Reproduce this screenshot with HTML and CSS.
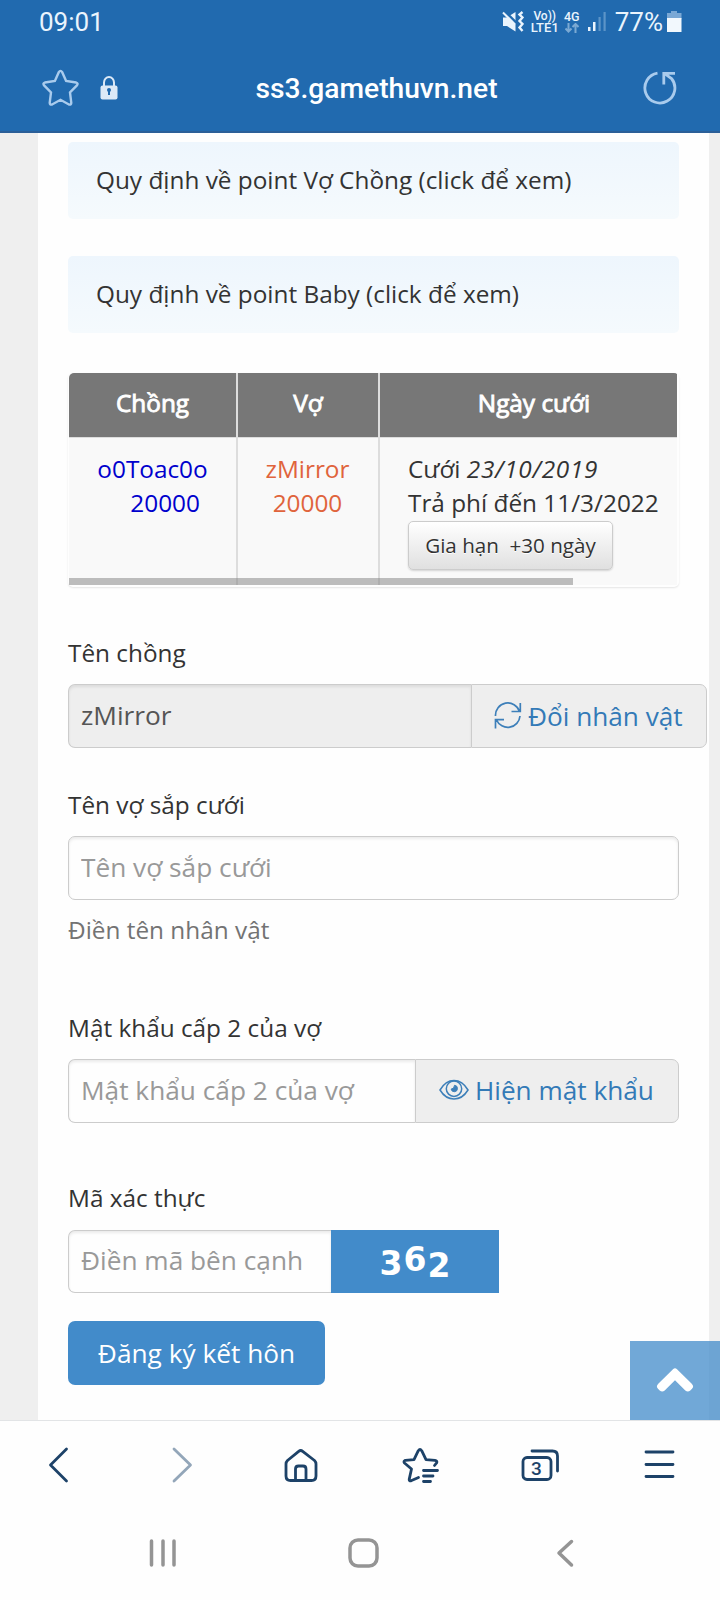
FILE: index.html
```
<!DOCTYPE html>
<html lang="vi">
<head>
  <meta charset="utf-8">
  <title>ss3.gamethuvn.net</title>
  <link rel="stylesheet" href="styles.css">
</head>
<body>
  <div class="topbar">
    <div class="status">
      <span class="clock">09:01</span>
      <svg class="mute" width="22" height="22" viewBox="0 0 22 22">
        <path d="M1 6.500h4L13.500 1v19.500L5 15H1z" fill="#eaf4fd"/>
        <path d="M2.500 0l12 12" stroke="#216aaf" stroke-width="2.500"/>
        <path d="M1 1.500l12 12" stroke="#eaf4fd" stroke-width="2"/>
        <path d="M20.500 1L17.500 3.500l3 3-3 3.500 3 3-3 3.500 3 3.500" fill="none" stroke="#eaf4fd" stroke-width="2.400"/>
      </svg>
      <div class="volte"><span>Vo))</span><span class="lte">LTE1</span></div>
      <div class="data">
        <span>4G</span>
        <svg width="14" height="10" viewBox="0 0 14 10">
          <path d="M3.500 0v8.500M.5 5.500l3 3 3-3M10.500 10V1M7.500 4l3-3 3 3" fill="none" stroke="#7ba9d3" stroke-width="2"/>
        </svg>
      </div>
      <svg class="signal" width="19" height="20" viewBox="0 0 19 20">
        <path d="M0 15h2.500v4H0zM5 10h2.500v9H5z" fill="#eaf4fd"/>
        <path d="M10.500 5h2.200v14h-2.200zM15.500 0h2.200v19h-2.200z" fill="#5c94c8"/>
      </svg>
      <span class="percent">77%</span>
      <svg class="battery" width="15" height="22" viewBox="0 0 15 22">
        <path d="M4 0h6v2h4.500v6H0V2h4z" fill="#7aa8d5"/>
        <path d="M0 7h14.500v14H0z" fill="#f2f8fd"/>
      </svg>
    </div>
    <div class="address">
      <svg class="fav" width="38" height="38" viewBox="0 0 38 38">
        <path d="M16.800 3.200q1.700-2.600 3.400 0L24.100 12l10 1.500q2.400.9.800 2.900L28 23.500l1.300 10.400q-.2 2.300-2.400 1.600L18.500 30.800l-8.400 4.700q-2.200.7-2.400-1.600L9 23.500 2.100 16.400q-1.600-2 .8-2.900l10-1.500z" fill="none" stroke="#a9cbed" stroke-width="2.400"/>
      </svg>
      <svg class="lock" width="18" height="24" viewBox="0 0 18 24">
        <path d="M4 11V6.500a5 5.500 0 0 1 10 0V11" fill="none" stroke="#dce9f7" stroke-width="2"/>
        <rect x=".5" y="9.500" width="17" height="14" rx="2" fill="#dce9f7"/>
        <path d="M9 14v5" stroke="#216aaf" stroke-width="2"/>
        <circle cx="9" cy="14" r="2" fill="#216aaf"/>
      </svg>
      <div class="url">ss3.gamethuvn.net</div>
      <svg class="reload" width="36" height="36" viewBox="0 0 36 36">
        <path d="M15.500 3.200A15 15 0 1 0 29.500 8.500L23 3.800M21.800 14.500V3.300H33" fill="none" stroke="#a9cbed" stroke-width="2.800"/>
      </svg>
    </div>
  </div>

  <div class="viewport">
    <div class="page">
      <div class="notice">Quy định về point Vợ Chồng (click để xem)</div>
      <div class="notice">Quy định về point Baby (click để xem)</div>

      <div class="table-box">
        <table>
          <tr>
            <th class="col-husband">Chồng</th>
            <th class="col-wife">Vợ</th>
            <th class="col-date">Ngày cưới</th>
          </tr>
          <tr>
            <td class="husband">o0Toac0o<br>&nbsp;&nbsp;&nbsp; 20000</td>
            <td class="wife">zMirror<br>20000</td>
            <td class="wedding">Cưới <em>23/10/2019</em><br>Trả phí đến 11/3/2022<br><button class="btn-renew">Gia hạn &nbsp;+30 ngày</button></td>
          </tr>
        </table>
        <div class="scroll-thumb"></div>
      </div>

      <label>Tên chồng</label>
      <div class="input-group group-husband">
        <input type="text" value="zMirror" readonly>
        <a class="addon">
          <svg width="28" height="28" viewBox="0 0 28 28">
            <path d="M1.500 14A12.300 12.300 0 0 1 25.500 9.500M17.500 9.500h8.800V1M26 14A12.300 12.300 0 0 1 2.500 18M10 17.700H1.500V26.500" fill="none" stroke="#3d7fb9" stroke-width="1.700"/>
          </svg>
          Đổi nhân vật
        </a>
      </div>

      <label>Tên vợ sắp cưới</label>
      <div class="input-group">
        <input type="text" placeholder="Tên vợ sắp cưới">
      </div>
      <p class="help">Điền tên nhân vật</p>

      <label>Mật khẩu cấp 2 của vợ</label>
      <div class="input-group group-password">
        <input type="text" placeholder="Mật khẩu cấp 2 của vợ">
        <a class="addon">
          <svg width="30" height="22" viewBox="0 0 30 22">
            <path d="M1 11Q6.500 1.500 15 1.500T29 11Q23.500 20 15 20T1 11z" fill="none" stroke="#3d7fb9" stroke-width="1.500"/>
            <circle cx="15" cy="9.700" r="7.700" fill="none" stroke="#3d7fb9" stroke-width="1.500"/>
            <path d="M15.500 6.300a3.200 3.200 0 1 1-3.400 3.800q3.200 0 3.400-3.800z" fill="#3d7fb9" stroke="#3d7fb9"/>
          </svg>
          Hiện mật khẩu
        </a>
      </div>

      <label>Mã xác thực</label>
      <div class="input-group group-captcha">
        <input type="text" placeholder="Điền mã bên cạnh">
        <div class="captcha"><span class="d1">3</span><span class="d2">6</span><span class="d3">2</span></div>
      </div>

      <button class="btn-submit">Đăng ký kết hôn</button>
    </div>

    <a class="to-top">
      <svg width="40" height="28" viewBox="0 0 40 28">
        <path d="M3.500 16.500L18 2.200q2-1.800 4 0l14.500 14.300q3 3 .5 5.300l-1.700 1.600q-2.500 2-5 0L20 13.200 9.700 23.400q-2.500 2-5 0L3 21.800q-2.500-2.300.5-5.300z" fill="#fff"/>
      </svg>
    </a>
  </div>

  <div class="toolbar">
    <svg width="40" height="40" viewBox="0 0 40 40"><path d="M26.500 4L10.500 20l16 16" class="line"/></svg>
    <svg width="40" height="40" viewBox="0 0 40 40"><path d="M14 4l16.500 16L14 36" class="line faded"/></svg>
    <svg width="40" height="40" viewBox="0 0 40 40">
      <path d="M18.700 6.300q2-1.600 4 0L34.500 15.500q1.500 1.500 1.500 3.500V31q0 4.500-4.500 4.500H10.500Q6 35.500 6 31V19q0-2 1.500-3.500zM15.500 35V24q0-3 3-3h4.500q3 0 3 3v11" class="line"/>
    </svg>
    <svg width="40" height="40" viewBox="0 0 40 40">
      <path d="M18.500 32.500l-7.500 3.300q-1.800.4-1.800-1.400L11.500 24 4.500 18q-1.400-1.700.8-2.700L14 14.700l4.300-9q1.700-2.400 3.400 0L26 14.700l9 .6q2.300.5 1.800 2.300L34.500 20.500M23.500 25.500h14M23.500 31H33M23.500 36.500h7" class="line"/>
    </svg>
    <svg width="40" height="40" viewBox="0 0 40 40">
      <rect x="3" y="12.500" width="28" height="22" rx="4" class="line"/>
      <path d="M12 6h20.500q5 0 5 5v15" class="line"/>
      <text x="16.500" y="29.500" class="tabs">3</text>
    </svg>
    <svg width="40" height="40" viewBox="0 0 40 40"><path d="M6 7h27M6 19.500h27M6 31.500h27" class="line"/></svg>
  </div>

  <div class="navbar">
    <svg width="32" height="32" viewBox="0 0 32 32"><path d="M4.500 4v24M16 4v24M27 4v24" class="sys"/></svg>
    <svg width="32" height="32" viewBox="0 0 32 32"><rect x="2" y="3" width="27" height="26" rx="8" class="sys"/></svg>
    <svg width="32" height="32" viewBox="0 0 32 32"><path d="M22.500 4.500L10 16l12.500 12" class="sys"/></svg>
  </div>
</body>
</html>
```
FILE: styles.css
```
* {
  box-sizing: border-box;
}

body {
  margin: 0;
  width: 720px;
  height: 1600px;
  overflow: hidden;
  background: #fefefe;
  color: #333;
  font: 24.350px/34px "Open Sans", sans-serif;
}

/* browser header */
.topbar {
  height: 133px;
  background: #216aaf;
  border-bottom: 2px solid #2b5f98;
  color: #fff;
  font-family: Roboto, sans-serif;
}

.status {
  display: flex;
  align-items: center;
  height: 44px;
  padding: 0 38px 0 39px;
  font-size: 26px;
  color: #eaf4fd;
}

.clock {
  flex: 1;
}

.mute {
  margin-right: 7px;
}

.volte {
  display: flex;
  flex-direction: column;
  align-items: center;
  width: 28px;
  font-size: 12px;
  line-height: 11px;
  font-weight: 500;
}

.lte {
  font-size: 13px;
}

.data {
  display: flex;
  flex-direction: column;
  align-items: center;
  width: 16px;
  margin: 0 8px 0 5px;
  font-size: 12.500px;
  line-height: 12px;
  font-weight: 500;
}

.signal {
  margin-right: 8px;
}

.percent {
  margin-right: 4px;
}

.address {
  display: flex;
  align-items: center;
  height: 88px;
  padding: 0 42px;
}

.lock {
  margin-left: 20px;
}

.url {
  flex: 1;
  padding: 2px 7px 0 0;
  text-align: center;
  font-size: 28.200px;
  font-weight: 500;
}

/* web page */
.viewport {
  position: relative;
  height: 1287px;
  padding: 0 11px 0 38px;
  background: #efefef;
}

.page {
  height: 100%;
  padding: 9px 30px 0;
  background: #fefefe;
}

.notice {
  height: 77px;
  margin-bottom: 37px;
  padding: 21px 28px;
  border-radius: 5px;
  background: linear-gradient(#eef6fd, #f5fafd);
}

.table-box {
  position: relative;
  height: 214px;
  margin: 40px 0 49px;
  padding: 0 2px 2px 1px;
  border-radius: 5px;
  box-shadow: 0 1px 2px rgba(0,0,0,0.1);
  overflow: hidden;
}

table {
  width: 100%;
  height: 212px;
  border-collapse: separate;
  border-spacing: 0;
  table-layout: fixed;
  background: #f9f9f9;
}

th {
  height: 64px;
  padding: 0 0 4px;
  background: #777;
  color: #fff;
  font-weight: 400;
  -webkit-text-stroke: 0.9px #fff;
}

th:first-child {
  border-radius: 5px 0 0 0;
}

.col-husband {
  width: 167px;
}

.col-wife {
  width: 142px;
}

.col-date {
  padding-left: 11px;
}

th + th,
td + td {
  border-left: 2px solid #ddd;
}

td {
  padding: 14px 0 0;
  border-top: 1px solid #ddd;
  vertical-align: top;
  text-align: center;
  white-space: nowrap;
}

em {
  letter-spacing: 0.7px;
}

.husband {
  color: #0000cd;
}

.wife {
  padding-right: 1px;
  color: #e0643c;
}

.wedding {
  padding-left: 28px;
  text-align: left;
}

.btn-renew {
  display: block;
  width: 205px;
  height: 49px;
  margin-top: 1px;
  padding: 0 0 1px;
  border: 1px solid #ccc;
  border-radius: 5px;
  background: linear-gradient(#fff, #e0e0e0);
  box-shadow: 0 1px 2px rgba(0,0,0,0.15);
  color: #333;
  font: 20.600px/30px "Open Sans", sans-serif;
  text-shadow: 0 1px 0 #fff;
}

.scroll-thumb {
  position: absolute;
  left: 1px;
  bottom: 2px;
  width: 504px;
  height: 7px;
  background: rgba(128,128,128,0.5);
}

label {
  display: block;
  margin-bottom: 14px;
}

.input-group {
  display: flex;
  height: 64px;
  margin-bottom: 40px;
}

.input-group input {
  flex: 1;
  min-width: 0;
  padding: 0 12px 2px;
  border: 1px solid #ccc;
  border-radius: 7px;
  background: #fefefe;
  box-shadow: inset 0 2px 3px rgba(0,0,0,0.08);
  color: #555;
  font: 26.250px "Open Sans", sans-serif;
}

.input-group input::placeholder {
  color: #999;
}

.input-group input:not(:last-child) {
  border-right: 0;
  border-radius: 7px 0 0 7px;
}

.input-group input[readonly] {
  background: #eee;
}

.addon {
  display: flex;
  align-items: center;
  gap: 6px;
  padding-bottom: 1px;
  border: 1px solid #ccc;
  border-radius: 0 7px 7px 0;
  background: #eee;
  color: #337ab7;
  font-size: 26.200px;
  white-space: nowrap;
}

.group-husband {
  width: 639px;
}

.group-husband .addon {
  width: 236px;
  padding-left: 22px;
}

.help {
  margin: -27px 0 64px;
  color: #737373;
}

.group-password {
  margin-bottom: 58px;
}

.group-password .addon {
  width: 264px;
  padding: 0 0 2px 23px;
}

.group-captcha {
  width: 431px;
  height: 63px;
  margin: 15px 0 28px;
}

.group-captcha input {
  padding-bottom: 3px;
}

.captcha {
  display: flex;
  justify-content: center;
  align-items: center;
  width: 168px;
  padding-top: 3px;
  background: #428bca;
  color: #fff;
  font: bold 33px/33px "DejaVu Sans", sans-serif;
}

.captcha span {
  width: 24px;
  text-align: center;
}

.captcha .d2 {
  padding-bottom: 8px;
}

.captcha .d3 {
  padding-top: 4px;
}

.btn-submit {
  width: 257px;
  height: 64px;
  padding: 0;
  border: 0;
  border-radius: 7px;
  background: #428bca;
  color: #fff;
  font: 26.250px "Open Sans", sans-serif;
}

.to-top {
  position: absolute;
  right: 0;
  bottom: 0;
  display: flex;
  justify-content: center;
  align-items: center;
  width: 90px;
  height: 79px;
  background: rgba(66,139,202,0.75);
}

/* browser toolbar and system buttons */
.toolbar {
  display: grid;
  grid-template-columns: repeat(6, 1fr);
  justify-items: center;
  align-items: center;
  height: 91px;
  padding-bottom: 2px;
  border-top: 1px solid #e2e4e6;
}

.line {
  fill: none;
  stroke: #1d4268;
  stroke-width: 2.800;
  stroke-linecap: round;
  stroke-linejoin: round;
}

.faded {
  stroke: #93a6b9;
}

.tabs {
  fill: #1d4268;
  font: 500 19px Roboto, sans-serif;
  text-anchor: middle;
}

.navbar {
  display: grid;
  grid-template-columns: repeat(3, 201px);
  justify-items: center;
  align-items: center;
  height: 84px;
  padding-left: 62px;
}

.sys {
  fill: none;
  stroke: #949494;
  stroke-width: 3.500;
  stroke-linecap: round;
  stroke-linejoin: round;
}
```
